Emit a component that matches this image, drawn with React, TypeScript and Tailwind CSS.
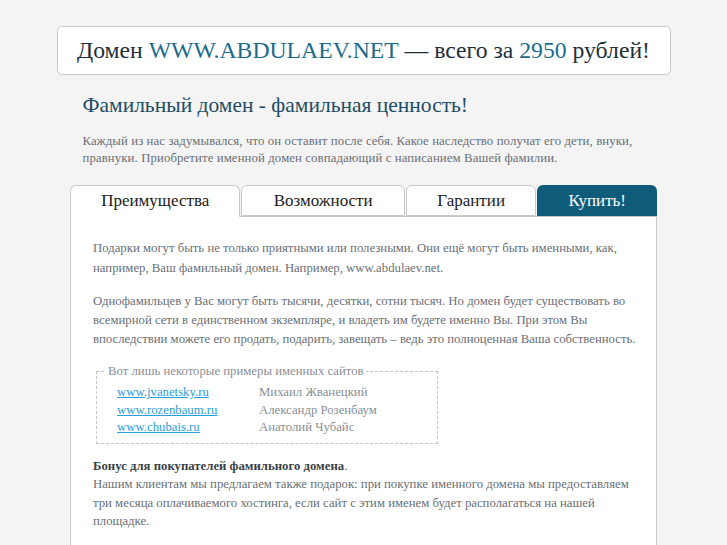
const serif = { fontFamily: '"Liberation Serif", "Times New Roman", serif' };

const tabs = [
  { label: "Преимущества", w: "w-[171px]", active: true },
  { label: "Возможности", w: "w-[164px]" },
  { label: "Гарантии", w: "w-[131px]" },
  { label: "Купить!", w: "w-[120px]", buy: true },
];

const examples = [
  { url: "www.jvanetsky.ru", name: "Михаил Жванецкий" },
  { url: "www.rozenbaum.ru", name: "Александр Розенбаум" },
  { url: "www.chubais.ru", name: "Анатолий Чубайс" },
];

export default function App() {
  return (
    <div className="min-h-[545px] bg-[#f4f4f4] pt-[26px]" style={serif}>
      <div className="mx-auto w-[614px]">
        {/* banner */}
        <div className="h-[49px] rounded-[5px] border border-[#c9c9c9] bg-white flex items-center justify-center text-[23.7px] text-[#1f2f3a]">
          Домен&nbsp;<span className="text-[#1b6c8c]">WWW.ABDULAEV.NET</span>&nbsp;— всего за&nbsp;
          <span className="text-[#1b6c8c]">2950</span>&nbsp;рублей!
        </div>

        <div className="px-[26px]">
          <h1 className="mt-[16px] text-[21.5px] leading-[28px] text-[#1d4d66]">
            Фамильный домен - фамильная ценность!
          </h1>
          <p className="mt-[14px] text-[12.75px] leading-[17px] text-[#6a6f75] tracking-[0.12px]">
            Каждый из нас задумывался, что он оставит после себя. Какое наследство получат его дети, внуки,
            правнуки. Приобретите именной домен совпадающий с написанием Вашей фамилии.
          </p>
        </div>

        <div className="mx-auto mt-[18px] w-[587px]">
          <div className="flex gap-[1px] items-end">
            {tabs.map((t) =>
              t.buy ? (
                <div
                  key={t.label}
                  className={`${t.w} h-[31px] rounded-t-[6px] bg-[#0f5b7a] text-white text-[17px] flex items-center justify-center`}
                >
                  {t.label}
                </div>
              ) : (
                <div
                  key={t.label}
                  className={`${t.w} h-[31px] rounded-t-[6px] border border-[#c9c9c9] bg-white text-[17px] text-[#1b1b1b] flex items-center justify-center ${
                    t.active ? "border-b-white relative z-10 -mb-px h-[32px]" : ""
                  }`}
                >
                  {t.label}
                </div>
              )
            )}
          </div>

          <div className="border border-[#c9c9c9] bg-white pl-[22px] pr-[10px] pt-[21px] pb-[20px] text-[12.75px] text-[#6a6f75] min-h-[340px]">
            <p className="leading-[20px]">
              Подарки могут быть не только приятными или полезными. Они ещё могут быть именными, как,
              например, Ваш фамильный домен. Например, www.abdulaev.net.
            </p>
            <p className="mt-[14px] leading-[19px]">
              Однофамильцев у Вас могут быть тысячи, десятки, сотни тысяч. Но домен будет существовать во
              всемирной сети в единственном экземпляре, и владеть им будете именно Вы. При этом Вы
              впоследствии можете его продать, подарить, завещать – ведь это полноценная Ваша собственность.
            </p>

            <fieldset className="mt-[14px] ml-[3px] w-[342px] border border-dashed border-[#c4c4c4] pl-[20px] pb-[6px] pt-[5px]">
              <legend className="-ml-[11px] px-[2px] text-[#8a8f95] leading-[16px]">
                Вот лишь некоторые примеры именных сайтов
              </legend>
              {examples.map((e) => (
                <div key={e.url} className="flex leading-[17.5px]">
                  <a href="#" className="w-[142px] text-[#2a9ddc] underline">
                    {e.url}
                  </a>
                  <span className="text-[#8a8f95]">{e.name}</span>
                </div>
              ))}
            </fieldset>

            <p className="mt-[13px] leading-[18.5px] pr-[12px]">
              <b className="text-[#3a3f45]">Бонус для покупателей фамильного домена</b>.
              <br />
              Нашим клиентам мы предлагаем также подарок: при покупке именного домена мы предоставляем
              три месяца оплачиваемого хостинга, если сайт с этим именем будет располагаться на нашей
              площадке.
            </p>
          </div>
        </div>
      </div>
    </div>
  );
}
